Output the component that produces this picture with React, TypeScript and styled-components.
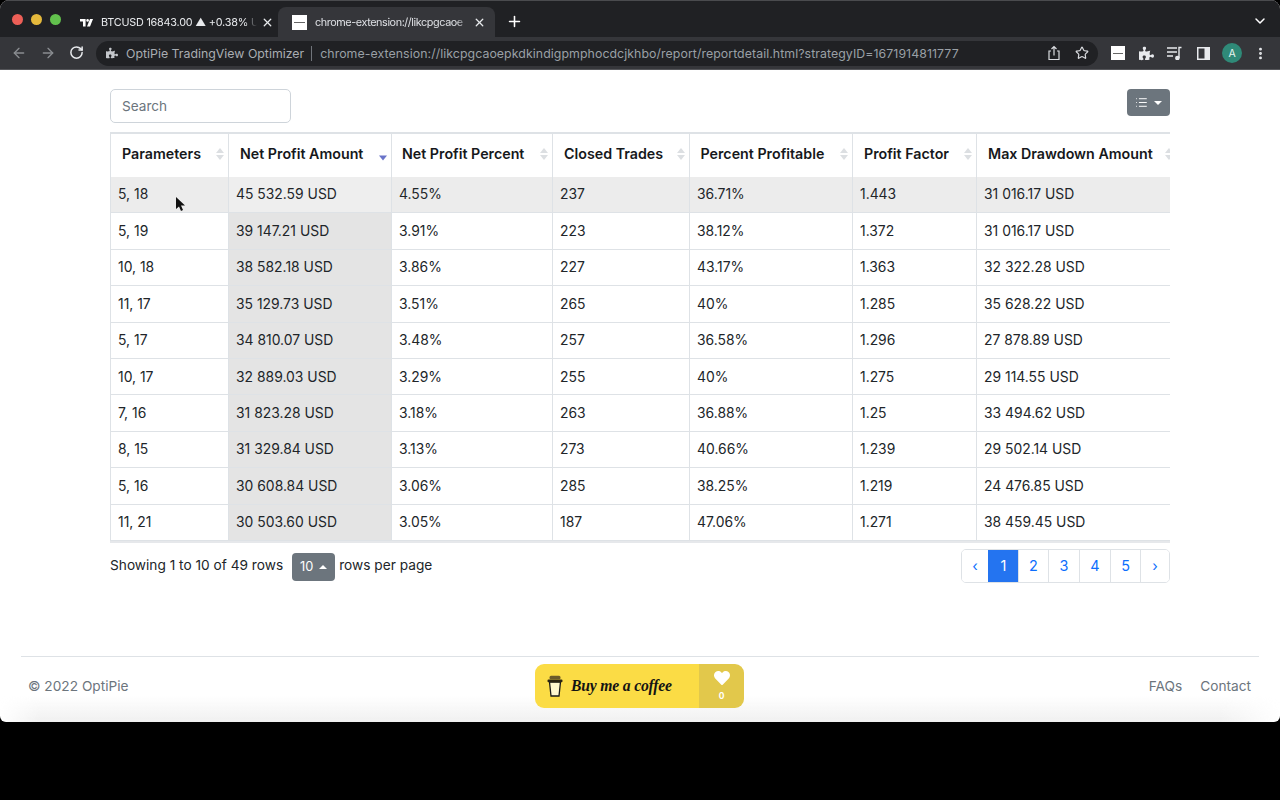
import React from 'react';
import styled, { createGlobalStyle } from 'styled-components';
import { ArrowLeft, ArrowRight, RotateCw, Star, ChevronDown, X, Plus, List, EllipsisVertical } from 'lucide-react';
import { FaPuzzlePiece, FaHeart } from 'react-icons/fa';

const Global = createGlobalStyle`
  html, body { margin: 0; padding: 0; background: #000; height: 800px; overflow: hidden; }
  * { box-sizing: border-box; }
  #root { height: 800px; font-family: Inter, "Liberation Sans", sans-serif; }
`;
const Win = styled.div`
  height: 722px; background: #fff; border-radius: 9px 9px 6px 6px; overflow: hidden;
  display: flex; flex-direction: column; position: relative;
`;
const TabStrip = styled.div`
  height: 37px; background: #202124; border-top: 1px solid #4a4b4e; display: flex; align-items: flex-end; padding-left: 12px; position: relative;
`;
const Lights = styled.div`display: flex; gap: 8px; align-self: flex-start; margin-top: 13px; width: 68px;`;
const Light = styled.span<{ $c: string }>`width: 11px; height: 11px; border-radius: 50%; background: ${p => p.$c};`;
const Tab = styled.div<{ $active?: boolean }>`
  width: ${p => (p.$active ? 217 : 198)}px; height: 30px; display: flex; align-items: center; gap: 8px; padding: 1px ${p => (p.$active ? 9 : 4)}px 0 ${p => (p.$active ? 14 : 0)}px;
  border-radius: 8px 8px 0 0; background: ${p => (p.$active ? '#35363a' : 'transparent')};
  color: ${p => (p.$active ? '#dfe1e5' : '#e8eaed')}; font-size: 10.8px;
  letter-spacing: ${p => (p.$active ? -0.4 : -0.2)}px;
`;
const TabText = styled.span`
  flex: 1; white-space: nowrap; overflow: hidden;
  -webkit-mask-image: linear-gradient(90deg, #000 92%, transparent 100%);
  mask-image: linear-gradient(90deg, #000 92%, transparent 100%);
`;
const TabClose = styled.span`display: flex; flex: none; margin-left: -4px; color: #e8eaed;`;
const Favicon = styled.span<{ $size: number }>`
  width: ${p => p.$size}px; height: ${p => p.$size}px; background: #fff; flex: none; display: flex; align-items: center; justify-content: center;
  &::after { content: ''; width: 72%; height: 1px; background: #666; }
`;
const NewTab = styled.div`color: #fff; display: flex; align-self: center; margin: 4px 0 0 11px;`;
const StripEnd = styled.div`margin-left: auto; margin-right: 12px; align-self: center; margin-top: 4px; color: #fff; display: flex;`;
const Toolbar = styled.div`
  height: 33px; background: #35363a; display: flex; align-items: center; padding-left: 11px; border-bottom: 1px solid #55565a;
`;
const NavBtn = styled.span<{ $dim?: boolean; $gap: number }>`
  width: 16px; height: 16px; display: flex; flex: none; margin-right: ${p => p.$gap}px; color: ${p => (p.$dim ? '#8a8d91' : '#e8eaed')};
`;
const Omni = styled.div`
  flex: none; width: 1002px; height: 25px; border-radius: 13px; background: #202124; display: flex; align-items: center;
  padding: 0 9px 0 10px; font-size: 12.35px; color: #9aa0a6; white-space: nowrap;
`;
const OmniName = styled.span`margin-left: 8px; color: #a9adb2;`;
const OmniSep = styled.span`width: 1px; height: 15px; background: #70747a; margin: 0 8px 0 7px;`;
const OmniUrl = styled.span`flex: 1; letter-spacing: 0.06px;`;
const OmniIcon = styled.span`display: flex; color: #dadce0; margin-left: 14px;`;
const ExtRow = styled.div`flex: none; display: flex; align-items: center; gap: 13.4px; margin-left: 12.5px; color: #e8eaed;`;
const ExtIcon = styled.span`display: flex; width: 15px; justify-content: center;`;
const Avatar = styled.span`
  width: 20px; height: 20px; border-radius: 50%; background: #2f8a78; color: #e8f5f1; font-size: 10.5px; display: flex; align-items: center; justify-content: center;
  margin: 0 -2px;
`;
const Content = styled.main`flex: 1; display: flex; flex-direction: column; padding: 19px 110px 0; position: relative;`;
const TopBar = styled.div`display: flex; justify-content: space-between; align-items: flex-start; height: 43px;`;
const Search = styled.input`
  width: 181px; height: 34px; border: 1px solid #ced4da; border-radius: 5px; padding: 0 11px; font: 13.6px Inter, sans-serif; outline: none;
  &::placeholder { color: #6c757d; opacity: 1; }
`;
const ColumnsBtn = styled.div`
  width: 43px; height: 27px; background: #6c757d; border-radius: 4px; color: #fff; display: flex; align-items: center; justify-content: center; gap: 6px;
`;
const Caret = styled.span<{ $up?: boolean }>`
  width: 0; height: 0; border-left: 4px solid transparent; border-right: 4px solid transparent;
  ${p => (p.$up ? 'border-bottom: 4px solid #fff;' : 'border-top: 4px solid #fff;')}
`;
const TableClip = styled.div`width: 1060px; overflow: hidden; border-bottom: 2px solid #e6e8eb;`;
const Table = styled.table`
  width: 1067px; table-layout: fixed; border-collapse: collapse; font-size: 13.9px; color: #212529;
`;
const Th = styled.th`
  height: 43.5px; padding: 0; border: 1px solid #dee2e6; border-top-width: 2px; border-bottom: none; font-weight: 600; font-size: 14.25px; color: #16181b; text-align: left;
`;
const ThInner = styled.div<{ $pad: number }>`
  display: flex; align-items: center; justify-content: space-between; padding: 0 4px 3px ${p => p.$pad}px; white-space: nowrap;
`;
const Td = styled.td<{ $bg?: string }>`
  height: 36.4px; padding: 0 7px; border: 1px solid #dee2e6; border-top: none; border-bottom: 1px solid #dee2e6; white-space: nowrap;
  background: ${p => p.$bg || 'transparent'};
`;
const Footerbar = styled.div`display: flex; justify-content: space-between; align-items: flex-start; margin-top: 6px; height: 107px;`;
const Info = styled.div`display: flex; align-items: center; font-size: 13.7px; color: #212529; height: 33px;`;
const PageSize = styled.span`
  width: 43px; height: 28px; background: #6c757d; border-radius: 4px; color: #fff; font-size: 12.8px; display: flex; align-items: center; justify-content: center; gap: 6px;
  margin: 3px 4px 0 9px;
`;
const Pager = styled.nav`display: flex; height: 34px; border: 1px solid #dee2e6; border-radius: 5px; overflow: hidden;`;
const PageLink = styled.span<{ $active?: boolean; $w: number }>`
  width: ${p => p.$w}px; display: flex; align-items: center; justify-content: center; font-size: 14.4px;
  color: ${p => (p.$active ? '#fff' : '#0d6efd')}; background: ${p => (p.$active ? '#2474f0' : '#fff')};
  border-left: 1px solid ${p => (p.$active ? '#2474f0' : '#dee2e6')}; &:first-child { border-left: none; }
`;
const Footer = styled.footer`
  margin: 0 -89px; border-top: 1px solid #dee2e6; flex: 1; display: flex; align-items: center; justify-content: space-between;
  padding: 0 8px 7px 7px; position: relative; font-size: 13.7px; color: #6c757d;
`;
const Shade = styled.div`
  position: absolute; left: -21px; right: -21px; bottom: 0; height: 26px; background: linear-gradient(#fff0, #f0f0f0); pointer-events: none;
  -webkit-mask-image: linear-gradient(90deg, transparent, #000 40px, #000 calc(100% - 60px), transparent);
  mask-image: linear-gradient(90deg, transparent, #000 40px, #000 calc(100% - 60px), transparent);
`;
const FooterCopy = styled.span`position: relative;`;
const FooterLinks = styled.div`display: flex; gap: 18px; position: relative;`;
const Coffee = styled.div`
  position: absolute; left: 514px; top: 7px; width: 209px; height: 44px; border-radius: 9px; overflow: hidden; display: flex; z-index: 1;
`;
const CoffeeMain = styled.div`
  width: 164px; background: #fbdc45; display: flex; align-items: center; padding-left: 12px; gap: 8px; color: #141414;
  font: italic 700 15.7px "Liberation Serif", serif; letter-spacing: -0.2px;
`;
const CoffeeSide = styled.div`
  flex: 1; background: #e2c84b; color: #fff; display: flex; flex-direction: column; align-items: center; justify-content: flex-start; font-size: 8.5px; font-weight: 700; gap: 5px; padding-top: 6px;
`;
const CursorMark = styled.svg`position: absolute; left: 175px; top: 127px; z-index: 2;`;

const cols = [
  { t: 'Parameters', w: 118, p: 11 },
  { t: 'Net Profit Amount', w: 163, p: 11, sorted: true },
  { t: 'Net Profit Percent', w: 161, p: 10 },
  { t: 'Closed Trades', w: 137, p: 11 },
  { t: 'Percent Profitable', w: 163, p: 10.5 },
  { t: 'Profit Factor', w: 124, p: 11 },
  { t: 'Max Drawdown Amount', w: 201, p: 11 },
];
const rows = [
  ['5, 18', '45 532.59 USD', '4.55%', '237', '36.71%', '1.443', '31 016.17 USD'],
  ['5, 19', '39 147.21 USD', '3.91%', '223', '38.12%', '1.372', '31 016.17 USD'],
  ['10, 18', '38 582.18 USD', '3.86%', '227', '43.17%', '1.363', '32 322.28 USD'],
  ['11, 17', '35 129.73 USD', '3.51%', '265', '40%', '1.285', '35 628.22 USD'],
  ['5, 17', '34 810.07 USD', '3.48%', '257', '36.58%', '1.296', '27 878.89 USD'],
  ['10, 17', '32 889.03 USD', '3.29%', '255', '40%', '1.275', '29 114.55 USD'],
  ['7, 16', '31 823.28 USD', '3.18%', '263', '36.88%', '1.25', '33 494.62 USD'],
  ['8, 15', '31 329.84 USD', '3.13%', '273', '40.66%', '1.239', '29 502.14 USD'],
  ['5, 16', '30 608.84 USD', '3.06%', '285', '38.25%', '1.219', '24 476.85 USD'],
  ['11, 21', '30 503.60 USD', '3.05%', '187', '47.06%', '1.271', '38 459.45 USD'],
];

const SortIcon = ({ sorted }: { sorted?: boolean }) => (
  <svg width="8" height="14" viewBox="0 0 8 14">
    {sorted ? (
      <path d="M0 8.5h8l-4 5z" fill="#6a74c9" />
    ) : (
      <>
        <path d="M0 6l4-5 4 5z" fill="#dcdfe2" />
        <path d="M0 8h8l-4 5z" fill="#dcdfe2" />
      </>
    )}
  </svg>
);
const ShareIcon = () => (
  <svg width="14" height="16" viewBox="0 0 14 16" fill="none" stroke="currentColor" strokeWidth="1.2">
    <path d="M4 6H2v8.5h10V6h-2" />
    <path d="M7 10.5V1.5M4.5 4L7 1.5 9.5 4" />
  </svg>
);
const MediaIcon = () => (
  <svg width="15" height="14" viewBox="0 0 15 14" fill="none" stroke="currentColor" strokeWidth="1.4">
    <path d="M0 2h10M0 6h10M0 10h6" />
    <path d="M12 12V1.5h2.5" />
    <circle cx="10.4" cy="12" r="1.6" fill="currentColor" />
  </svg>
);
const PanelIcon = () => (
  <svg width="13" height="13" viewBox="0 0 13 13">
    <path fillRule="evenodd" d="M0 0h13v13H0zM1.5 1.5v10h6v-10z" fill="currentColor" />
  </svg>
);
const TvLogo = () => (
  <svg width="13" height="8" viewBox="0 0 13 8" fill="#fff" style={{ flex: 'none' }}>
    <path d="M0 0h5.6v7.5H3V2.6H0z" />
    <circle cx="7.6" cy="1.4" r="1.3" />
    <path d="M10 0h3l-3 7.5H7z" />
  </svg>
);
const CupIcon = () => (
  <svg width="16" height="22" viewBox="0 0 16 22" style={{ flex: 'none' }}>
    <path d="M2.5 7h11l-1.5 14H4z" fill="#fff8cf" stroke="#1a1a1a" strokeWidth="1.3" />
    <rect x="0.5" y="4.5" width="15" height="2.8" rx="1" fill="#2a2412" />
    <rect x="2.5" y="0.8" width="11" height="3.8" rx="1.5" fill="#6b5a2a" />
  </svg>
);

export default function App() {
  return (
    <Win>
      <Global />
      <TabStrip>
        <Lights>
          <Light $c="#ed5f57" />
          <Light $c="#e5b93c" />
          <Light $c="#62c14d" />
        </Lights>
        <Tab>
          <TvLogo />
          <TabText>BTCUSD 16843.00 ▲ +0.38% U</TabText>
          <TabClose><X size={13} strokeWidth={2.4} /></TabClose>
        </Tab>
        <Tab $active>
          <Favicon $size={15} />
          <TabText>chrome-extension://likcpgcaoe</TabText>
          <TabClose><X size={13} strokeWidth={2.4} /></TabClose>
        </Tab>
        <NewTab><Plus size={17} strokeWidth={2.2} /></NewTab>
        <StripEnd><ChevronDown size={16} strokeWidth={2.2} /></StripEnd>
      </TabStrip>
      <Toolbar>
        <NavBtn $dim $gap={13}><ArrowLeft size={16} /></NavBtn>
        <NavBtn $dim $gap={13}><ArrowRight size={16} /></NavBtn>
        <NavBtn $gap={11}><RotateCw size={15} strokeWidth={2.4} /></NavBtn>
        <Omni>
          <FaPuzzlePiece size={12} color="#c4c7cb" />
          <OmniName>OptiPie TradingView Optimizer</OmniName>
          <OmniSep />
          <OmniUrl>chrome-extension://likcpgcaoepkdkindigpmphocdcjkhbo/report/reportdetail.html?strategyID=1671914811777</OmniUrl>
          <OmniIcon><ShareIcon /></OmniIcon>
          <OmniIcon><Star size={14} /></OmniIcon>
        </Omni>
        <ExtRow>
          <ExtIcon><Favicon $size={14} /></ExtIcon>
          <ExtIcon><FaPuzzlePiece size={15} /></ExtIcon>
          <ExtIcon><MediaIcon /></ExtIcon>
          <ExtIcon><PanelIcon /></ExtIcon>
          <Avatar>A</Avatar>
          <ExtIcon><EllipsisVertical size={15} strokeWidth={2.6} /></ExtIcon>
        </ExtRow>
      </Toolbar>
      <Content>
        <CursorMark width="10" height="15" viewBox="0 0 10 15">
          <path d="M1 0v12l3-2.6L6 14l2-1-2-4.4h4z" fill="#111" />
        </CursorMark>
        <TopBar>
          <Search placeholder="Search" />
          <ColumnsBtn>
            <List size={13} strokeWidth={1.8} />
            <Caret />
          </ColumnsBtn>
        </TopBar>
        <TableClip>
          <Table>
            <colgroup>
              {cols.map(c => <col key={c.t} style={{ width: c.w }} />)}
            </colgroup>
            <thead>
              <tr>
                {cols.map(c => (
                  <Th key={c.t}>
                    <ThInner $pad={c.p}>
                      {c.t}
                      <SortIcon sorted={c.sorted} />
                    </ThInner>
                  </Th>
                ))}
              </tr>
            </thead>
            <tbody>
              {rows.map((r, i) => (
                <tr key={i}>
                  {r.map((v, j) => (
                    <Td key={j} $bg={i === 0 ? (j === 1 ? '#eeeeee' : '#ececec') : j === 1 ? '#e4e4e4' : undefined}>{v}</Td>
                  ))}
                </tr>
              ))}
            </tbody>
          </Table>
        </TableClip>
        <Footerbar>
          <Info>
            Showing 1 to 10 of 49 rows
            <PageSize>10 <Caret $up /></PageSize>
            rows per page
          </Info>
          <Pager>
            <PageLink $w={26}>‹</PageLink>
            <PageLink $w={30} $active>1</PageLink>
            <PageLink $w={30}>2</PageLink>
            <PageLink $w={31}>3</PageLink>
            <PageLink $w={31}>4</PageLink>
            <PageLink $w={30}>5</PageLink>
            <PageLink $w={29}>›</PageLink>
          </Pager>
        </Footerbar>
        <Footer>
          <Shade />
          <FooterCopy>© 2022 OptiPie</FooterCopy>
          <Coffee>
            <CoffeeMain><CupIcon />Buy me a coffee</CoffeeMain>
            <CoffeeSide><FaHeart size={16} />0</CoffeeSide>
          </Coffee>
          <FooterLinks>
            <span>FAQs</span>
            <span>Contact</span>
          </FooterLinks>
        </Footer>
      </Content>
    </Win>
  );
}
